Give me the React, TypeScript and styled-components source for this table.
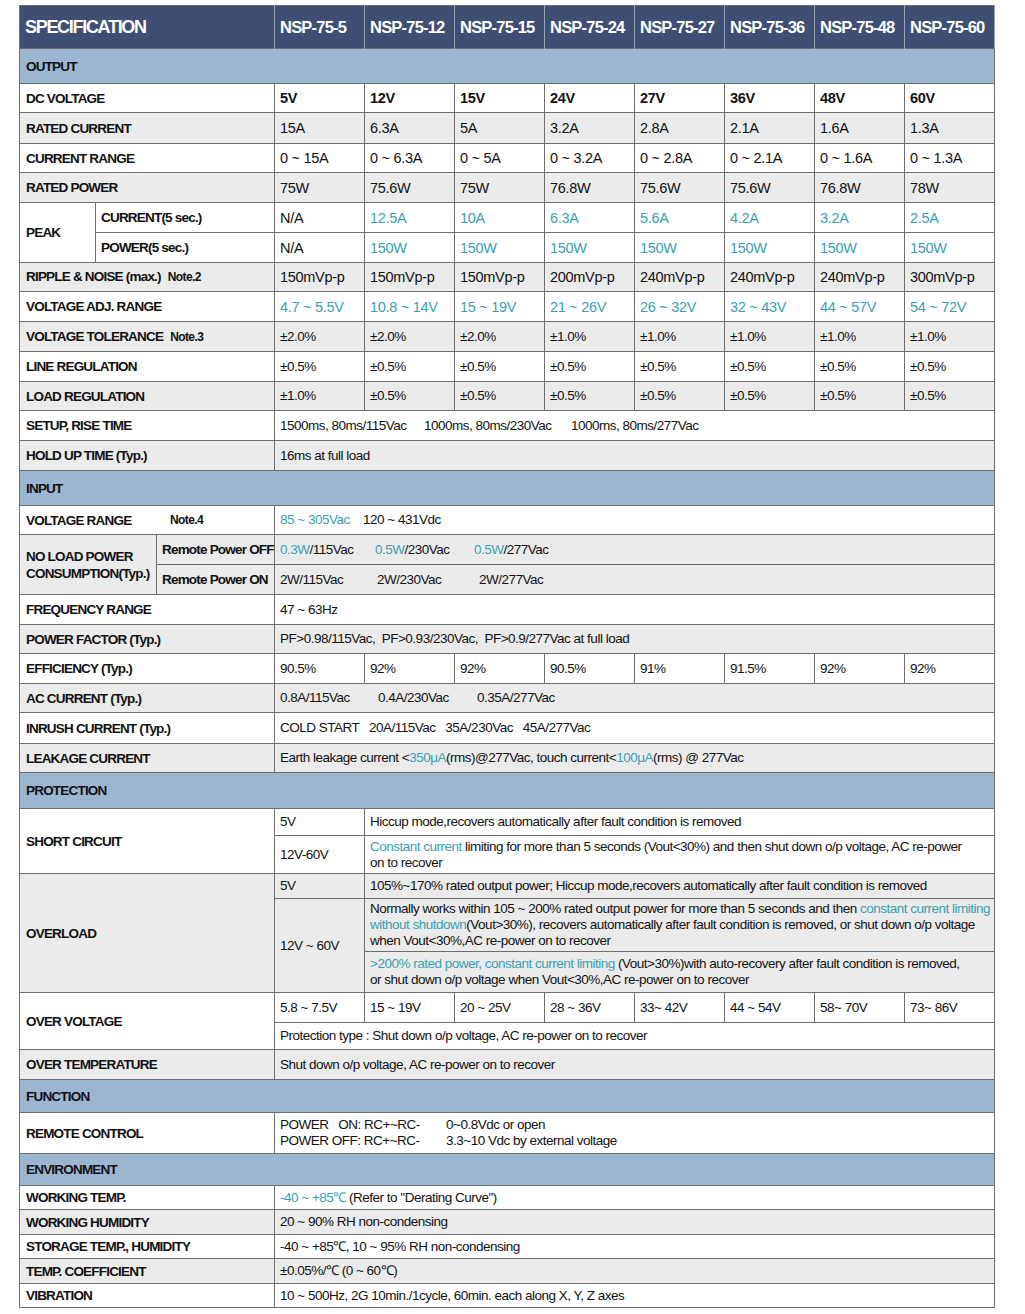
import React from "react";
import styled, { createGlobalStyle } from "styled-components";

const Global = createGlobalStyle`
  html, body { margin: 0; padding: 0; background: #ffffff; }
  body {
    font-family: "Liberation Sans", Arial, Helvetica, sans-serif;
    color: #111;
  }
`;

const Page = styled.div`
  padding: 5px 0 0 19px;
`;

const Table = styled.table`
  width: 976px;
  table-layout: fixed;
  border-collapse: collapse;
  border: 1px solid #6e6e6e;
`;

const HeadCell = styled.th<{ $big?: boolean }>`
  background: #3e4f73;
  color: #ffffff;
  font-size: ${(p) => (p.$big ? "18px" : "16.5px")};
  letter-spacing: ${(p) => (p.$big ? "-1.3px" : "-0.8px")};
  font-weight: 700;
  text-align: left;
  padding: 0 0 0 5px;
  border-right: 1px solid #9aa3b6;
  white-space: nowrap;
  overflow: hidden;
`;

const SectionCell = styled.td`
  background: #9cb6d1;
  font-size: 13.5px;
  letter-spacing: -0.8px;
  font-weight: 700;
  padding: 0 6px;
  border-top: 1px solid #6e6e6e;
  border-bottom: 1px solid #6e6e6e;
`;

const Row = styled.tr<{ $h: number; $gray?: boolean }>`
  height: ${(p) => p.$h}px;
  background: ${(p) => (p.$gray ? "#ebebeb" : "#ffffff")};
`;

const Label = styled.td`
  font-size: 13.5px;
  letter-spacing: -0.8px;
  font-weight: 700;
  padding: 0 4px 0 6px;
  border: 1px solid #6e6e6e;
  white-space: nowrap;
  line-height: 17px;
`;

const SubLabel = styled(Label)`
  padding-left: 5px;
`;

const Cell = styled.td<{ $bold?: boolean; $small?: boolean }>`
  font-size: ${(p) => (p.$small ? "13.5px" : "14.5px")};
  letter-spacing: ${(p) => (p.$small ? "-0.5px" : "-0.3px")};
  font-weight: ${(p) => (p.$bold ? 700 : 400)};
  padding: 0 4px 0 5px;
  border: 1px solid #6e6e6e;
  white-space: nowrap;
  line-height: 16px;
`;

const Lines = styled(Cell)`
  padding-top: 2px;
  padding-bottom: 2px;
`;

const Teal = styled.span`
  color: #3a9fb3;
`;

const Note = styled.span`
  font-size: 12px;
  letter-spacing: -0.6px;
  margin-left: 7px;
`;

const Segs = styled.div`
  display: flex;
`;

const Seg = styled.span<{ $w?: number }>`
  flex: 0 0 ${(p) => (p.$w ? `${p.$w}px` : "auto")};
`;

const TwoCol = styled.div`
  display: grid;
  grid-template-columns: 166px auto;
  line-height: 16px;
`;

const LabelGrid = styled.div`
  display: grid;
  grid-template-columns: 137px auto;
  align-items: center;
`;

const models = ["5", "12", "15", "24", "27", "36", "48", "60"];

type V = React.ReactNode;

const SimpleRow = ({
  h,
  gray,
  label,
  values,
  bold,
  small,
}: {
  h: number;
  gray?: boolean;
  label: V;
  values: V[];
  bold?: boolean;
  small?: boolean;
}) => (
  <Row $h={h} $gray={gray}>
    <Label colSpan={3}>{label}</Label>
    {values.map((v, i) => (
      <Cell key={i} $bold={bold} $small={small}>
        {v}
      </Cell>
    ))}
  </Row>
);

const SpanRow = ({
  h,
  gray,
  label,
  children,
}: {
  h: number;
  gray?: boolean;
  label: V;
  children: V;
}) => (
  <Row $h={h} $gray={gray}>
    <Label colSpan={3}>{label}</Label>
    <Cell colSpan={8} $small>
      {children}
    </Cell>
  </Row>
);

const Section = ({ h, title }: { h: number; title: string }) => (
  <Row $h={h}>
    <SectionCell colSpan={11}>{title}</SectionCell>
  </Row>
);

const t = (arr: string[]) => arr.map((s) => <Teal>{s}</Teal>);

export default function App() {
  return (
    <Page>
      <Global />
      <Table>
        <colgroup>
          <col style={{ width: 76 }} />
          <col style={{ width: 61 }} />
          <col style={{ width: 118 }} />
          {models.map((m) => (
            <col key={m} style={{ width: 90 }} />
          ))}
        </colgroup>
        <tbody>
          <Row $h={43}>
            <HeadCell colSpan={3} $big>
              SPECIFICATION
            </HeadCell>
            {models.map((m) => (
              <HeadCell key={m}>NSP-75-{m}</HeadCell>
            ))}
          </Row>
          <Section h={35} title="OUTPUT" />
          <SimpleRow h={29} label="DC VOLTAGE" bold values={["5V", "12V", "15V", "24V", "27V", "36V", "48V", "60V"]} />
          <SimpleRow h={31} gray label="RATED CURRENT" values={["15A", "6.3A", "5A", "3.2A", "2.8A", "2.1A", "1.6A", "1.3A"]} />
          <SimpleRow
            h={29}
            label="CURRENT RANGE"
            values={["0 ~ 15A", "0 ~ 6.3A", "0 ~ 5A", "0 ~ 3.2A", "0 ~ 2.8A", "0 ~ 2.1A", "0 ~ 1.6A", "0 ~ 1.3A"]}
          />
          <SimpleRow h={30} gray label="RATED POWER" values={["75W", "75.6W", "75W", "76.8W", "75.6W", "75.6W", "76.8W", "78W"]} />
          <Row $h={30}>
            <Label rowSpan={2}>PEAK</Label>
            <SubLabel colSpan={2}>CURRENT(5 sec.)</SubLabel>
            <Cell>N/A</Cell>
            {t(["12.5A", "10A", "6.3A", "5.6A", "4.2A", "3.2A", "2.5A"]).map((v, i) => (
              <Cell key={i}>{v}</Cell>
            ))}
          </Row>
          <Row $h={30}>
            <SubLabel colSpan={2}>POWER(5 sec.)</SubLabel>
            <Cell>N/A</Cell>
            {t(["150W", "150W", "150W", "150W", "150W", "150W", "150W"]).map((v, i) => (
              <Cell key={i}>{v}</Cell>
            ))}
          </Row>
          <SimpleRow
            h={29}
            gray
            label={
              <>
                RIPPLE &amp; NOISE (max.)<Note>Note.2</Note>
              </>
            }
            values={["150mVp-p", "150mVp-p", "150mVp-p", "200mVp-p", "240mVp-p", "240mVp-p", "240mVp-p", "300mVp-p"]}
          />
          <SimpleRow
            h={30}
            label="VOLTAGE ADJ. RANGE"
            values={t(["4.7 ~ 5.5V", "10.8 ~ 14V", "15 ~ 19V", "21 ~ 26V", "26 ~ 32V", "32 ~ 43V", "44 ~ 57V", "54 ~ 72V"])}
          />
          <SimpleRow
            h={30}
            gray
            small
            label={
              <>
                VOLTAGE TOLERANCE<Note>Note.3</Note>
              </>
            }
            values={["±2.0%", "±2.0%", "±2.0%", "±1.0%", "±1.0%", "±1.0%", "±1.0%", "±1.0%"]}
          />
          <SimpleRow h={30} small label="LINE REGULATION" values={Array(8).fill("±0.5%")} />
          <SimpleRow
            h={29}
            gray
            small
            label="LOAD REGULATION"
            values={["±1.0%", "±0.5%", "±0.5%", "±0.5%", "±0.5%", "±0.5%", "±0.5%", "±0.5%"]}
          />
          <SpanRow h={30} label="SETUP, RISE TIME">
            <Segs>
              <Seg $w={144}>1500ms, 80ms/115Vac</Seg>
              <Seg $w={147}>1000ms, 80ms/230Vac</Seg>
              <Seg>1000ms, 80ms/277Vac</Seg>
            </Segs>
          </SpanRow>
          <SpanRow h={30} gray label="HOLD UP TIME (Typ.)">
            16ms at full load
          </SpanRow>

          <Section h={35} title="INPUT" />
          <SpanRow
            h={29}
            label={
              <LabelGrid>
                <span>VOLTAGE RANGE</span>
                <Note>Note.4</Note>
              </LabelGrid>
            }
          >
            <Segs>
              <Seg $w={83}>
                <Teal>85 ~ 305Vac</Teal>
              </Seg>
              <Seg>120 ~ 431Vdc</Seg>
            </Segs>
          </SpanRow>
          <Row $h={30} $gray>
            <Label colSpan={2} rowSpan={2}>
              NO LOAD POWER
              <br />
              CONSUMPTION(Typ.)
            </Label>
            <SubLabel>Remote Power OFF</SubLabel>
            <Cell colSpan={8} $small>
              <Segs>
                <Seg $w={95}>
                  <Teal>0.3W</Teal>/115Vac
                </Seg>
                <Seg $w={99}>
                  <Teal>0.5W</Teal>/230Vac
                </Seg>
                <Seg>
                  <Teal>0.5W</Teal>/277Vac
                </Seg>
              </Segs>
            </Cell>
          </Row>
          <Row $h={30} $gray>
            <SubLabel>Remote Power ON</SubLabel>
            <Cell colSpan={8} $small>
              <Segs>
                <Seg $w={97}>2W/115Vac</Seg>
                <Seg $w={102}>2W/230Vac</Seg>
                <Seg>2W/277Vac</Seg>
              </Segs>
            </Cell>
          </Row>
          <SpanRow h={30} label="FREQUENCY RANGE">
            47 ~ 63Hz
          </SpanRow>
          <SpanRow h={29} gray label="POWER FACTOR (Typ.)">
            PF&gt;0.98/115Vac,&nbsp; PF&gt;0.93/230Vac,&nbsp; PF&gt;0.9/277Vac at full load
          </SpanRow>
          <SimpleRow
            h={30}
            small
            label="EFFICIENCY (Typ.)"
            values={["90.5%", "92%", "92%", "90.5%", "91%", "91.5%", "92%", "92%"]}
          />
          <SpanRow h={29} gray label="AC CURRENT (Typ.)">
            <Segs>
              <Seg $w={98}>0.8A/115Vac</Seg>
              <Seg $w={99}>0.4A/230Vac</Seg>
              <Seg>0.35A/277Vac</Seg>
            </Segs>
          </SpanRow>
          <SpanRow h={31} label="INRUSH CURRENT (Typ.)">
            COLD START&nbsp;&nbsp; 20A/115Vac&nbsp;&nbsp; 35A/230Vac&nbsp;&nbsp; 45A/277Vac
          </SpanRow>
          <SpanRow h={29} gray label="LEAKAGE CURRENT">
            Earth leakage current &lt;<Teal>350μA</Teal>(rms)@277Vac, touch current&lt;<Teal>100μA</Teal>(rms) @ 277Vac
          </SpanRow>

          <Section h={36} title="PROTECTION" />
          <Row $h={27}>
            <Label colSpan={3} rowSpan={2}>
              SHORT CIRCUIT
            </Label>
            <Cell $small>5V</Cell>
            <Lines colSpan={7} $small>
              Hiccup mode,recovers automatically after fault condition is removed
            </Lines>
          </Row>
          <Row $h={38}>
            <Cell $small>12V-60V</Cell>
            <Lines colSpan={7} $small>
              <Teal>Constant current</Teal> limiting for more than 5 seconds (Vout&lt;30%) and then shut down o/p voltage, AC re-power
              <br />
              on to recover
            </Lines>
          </Row>
          <Row $h={25} $gray>
            <Label colSpan={3} rowSpan={3}>
              OVERLOAD
            </Label>
            <Cell $small>5V</Cell>
            <Lines colSpan={7} $small>
              105%~170% rated output power; Hiccup mode,recovers automatically after fault condition is removed
            </Lines>
          </Row>
          <Row $h={53} $gray>
            <Cell $small rowSpan={2}>
              12V ~ 60V
            </Cell>
            <Lines colSpan={7} $small>
              Normally works within 105 ~ 200% rated output power for more than 5 seconds and then{" "}
              <Teal>constant current limiting</Teal>
              <br />
              <Teal>without shutdown</Teal>(Vout&gt;30%), recovers automatically after fault condition is removed, or shut down o/p voltage
              <br />
              when Vout&lt;30%,AC re-power on to recover
            </Lines>
          </Row>
          <Row $h={41} $gray>
            <Lines colSpan={7} $small>
              <Teal>&gt;200% rated power, constant current limiting</Teal> (Vout&gt;30%)with auto-recovery after fault condition is removed,
              <br />
              or shut down o/p voltage when Vout&lt;30%,AC re-power on to recover
            </Lines>
          </Row>
          <Row $h={30}>
            <Label colSpan={3} rowSpan={2}>
              OVER VOLTAGE
            </Label>
            {["5.8 ~ 7.5V", "15 ~ 19V", "20 ~ 25V", "28 ~ 36V", "33~ 42V", "44 ~ 54V", "58~ 70V", "73~ 86V"].map((v, i) => (
              <Cell key={i} $small>
                {v}
              </Cell>
            ))}
          </Row>
          <Row $h={27}>
            <Cell colSpan={8} $small>
              Protection type : Shut down o/p voltage, AC re-power on to recover
            </Cell>
          </Row>
          <SpanRow h={30} gray label="OVER TEMPERATURE">
            Shut down o/p voltage, AC re-power on to recover
          </SpanRow>

          <Section h={33} title="FUNCTION" />
          <SpanRow h={41} label="REMOTE CONTROL">
            <TwoCol>
              <span>POWER&nbsp;&nbsp; ON: RC+~RC-</span>
              <span>0~0.8Vdc or open</span>
              <span>POWER OFF: RC+~RC-</span>
              <span>3.3~10 Vdc by external voltage</span>
            </TwoCol>
          </SpanRow>

          <Section h={32} title="ENVIRONMENT" />
          <SpanRow h={24} label="WORKING TEMP.">
            <Teal>-40 ~ +85℃</Teal> (Refer to "Derating Curve")
          </SpanRow>
          <SpanRow h={25} gray label="WORKING HUMIDITY">
            20 ~ 90% RH non-condensing
          </SpanRow>
          <SpanRow h={24} label="STORAGE TEMP., HUMIDITY">
            -40 ~ +85℃, 10 ~ 95% RH non-condensing
          </SpanRow>
          <SpanRow h={25} gray label="TEMP. COEFFICIENT">
            ±0.05%/℃ (0 ~ 60℃)
          </SpanRow>
          <SpanRow h={24} label="VIBRATION">
            10 ~ 500Hz, 2G 10min./1cycle, 60min. each along X, Y, Z axes
          </SpanRow>
        </tbody>
      </Table>
    </Page>
  );
}
